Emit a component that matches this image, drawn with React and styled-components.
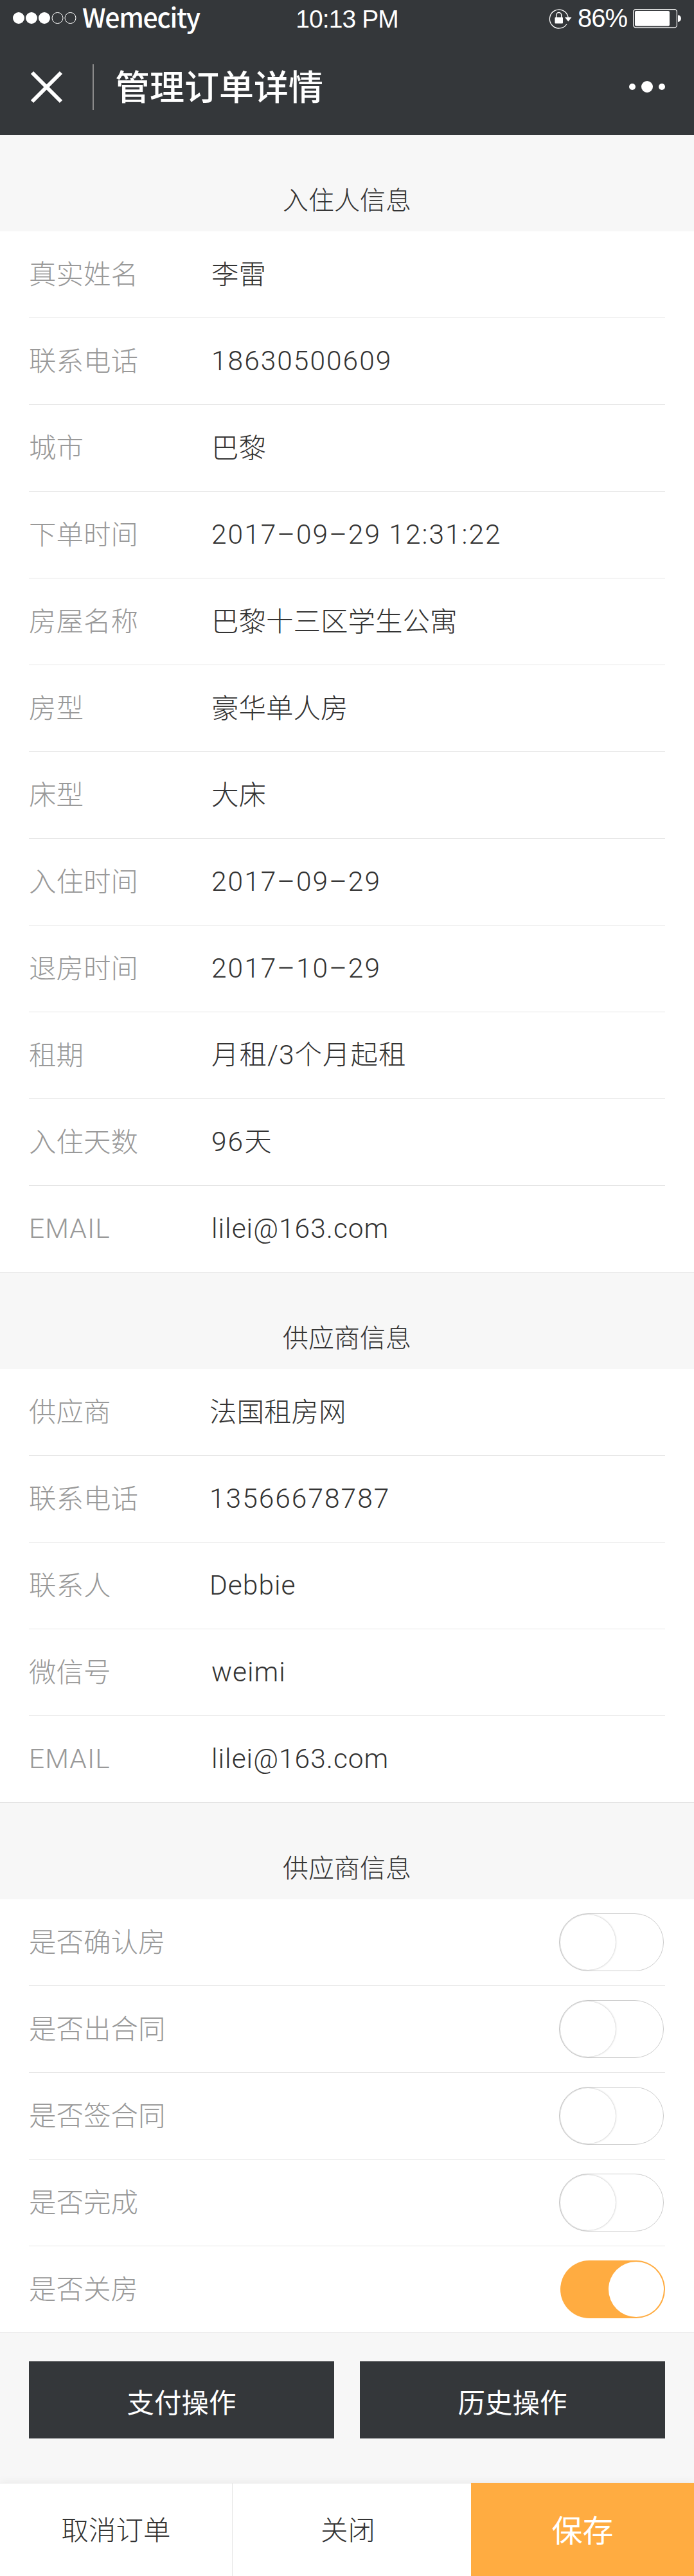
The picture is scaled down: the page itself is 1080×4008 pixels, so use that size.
import React from "react";
import styled, { createGlobalStyle } from "styled-components";

const latin = '"Liberation Sans", Arial';
const cjk = '"Noto Sans CJK SC", sans-serif';

const Global = createGlobalStyle`
  * { box-sizing: border-box; }
  body { margin: 0; background: #f7f7f7; }
`;

const Page = styled.div`
  width: 1080px;
  height: 4008px;
  display: flex;
  flex-direction: column;
  background: #f7f7f7;
  color: #333;
  font-family: ${cjk};
  font-weight: 300;
`;

const Header = styled.header`
  height: 210px;
  background: #34373a;
  color: #fff;
`;

const StatusBar = styled.div`
  height: 60px;
  display: grid;
  grid-template-columns: 400px 280px 400px;
`;

const Carrier = styled.div`
  display: flex;
  align-items: center;
  padding: 0 0 4px 20px;
  gap: 9px;
  height: 60px;
`;

const CarrierName = styled.span`
  font: 500 41px/50px ${cjk};
  letter-spacing: -1.3px;
  padding-bottom: 7px;
`;

const Clock = styled.div`
  text-align: center;
  font: 400 39px/60px ${latin}, sans-serif;
  letter-spacing: -0.9px;
`;

const Power = styled.div`
  display: flex;
  align-items: center;
  justify-content: flex-end;
  height: 57px;
  padding-right: 20px;
  gap: 9px;
  font: 400 40px/57px ${latin}, sans-serif;
`;

const Percent = styled.span`
  letter-spacing: -1px;
`;

const NavBar = styled.div`
  height: 150px;
  display: flex;
  align-items: center;
  padding: 0 45px 0 47px;
`;

const Divider = styled.i`
  width: 2px;
  height: 71px;
  margin: 0 33px 0 46px;
  background: #8a8a8a;
`;

const Title = styled.h1`
  margin: 0;
  padding-bottom: 5px;
  flex: 1;
  font-size: 54px;
  font-weight: 500;
  line-height: 80px;
`;

const SectionTitle = styled.h2`
  margin: 0;
  height: 150px;
  padding-top: 69px;
  text-align: center;
  font-size: 40px;
  font-weight: 300;
  line-height: 60px;
`;

const List = styled.section`
  background: #fff;
  padding: 0 45px;
  border-bottom: 1px solid #e5e5e5;
`;

const Row = styled.div`
  height: 135px;
  display: flex;
  align-items: center;
  border-bottom: 1px solid #e5e5e5;
  font: 300 42.5px/60px Inter, ${cjk};
  &:last-child { height: 134px; border-bottom: 0; }
`;

const Text = styled.span`
  font-family: ${(p) => (p.$tracking ? "Roboto" : "Inter")}, ${cjk};
  letter-spacing: ${(p) => p.$tracking}px;
`;

const Label = styled(Text)`
  width: ${(p) => (p.$narrow ? 281 : 284)}px;
  color: #999;
`;

const Switch = styled.span`
  margin-left: auto;
  margin-right: ${(p) => (p.$on ? 0 : 2)}px;
  width: 163px;
  height: 90px;
  padding: ${(p) => (p.$on ? 2 : 1)}px;
  display: flex;
  justify-content: ${(p) => (p.$on ? "flex-end" : "flex-start")};
  border-radius: 45px;
  border: ${(p) => (p.$on ? "0" : "1px solid #ccc")};
  background: ${(p) => (p.$on ? "#ffac41" : "#fff")};
`;

const Knob = styled.i`
  width: 86px;
  height: 86px;
  border-radius: 50%;
  background: #fff;
  box-shadow: ${(p) => (p.$on ? "none" : "0 0 3px rgba(0,0,0,.3)")};
`;

const Actions = styled.div`
  display: flex;
  gap: 40px;
  padding: 44px 45px 0;
  flex: 1;
`;

const ActionButton = styled.button`
  flex: 1;
  height: 120px;
  padding: 3px 0 0;
  border: 0;
  background: #34373a;
  color: #fff;
  font: 400 42.5px/60px ${cjk};
`;

const Footer = styled.footer`
  height: 145px;
  display: grid;
  grid-template-columns: 362px 371px 347px;
  box-shadow: 0 -2px 12px rgba(0, 0, 0, 0.05);
`;

const FooterButton = styled.button`
  padding: 0 ${(p) => (p.$inset || 0)}px 4px 0;
  border: 0 solid #e5e5e5;
  border-top-width: ${(p) => (p.$primary ? 0 : 1)}px;
  border-right-width: ${(p) => (p.$divided ? 1 : 0)}px;
  background: ${(p) => (p.$primary ? "#ffac41" : "#fff")};
  color: ${(p) => (p.$primary ? "#fff" : "#333")};
  font: ${(p) => (p.$primary ? "400 48px" : "300 42.5px")}/60px ${cjk};
`;

const guest = [
  ["真实姓名", "李雷"],
  ["联系电话", "18630500609"],
  ["城市", "巴黎"],
  ["下单时间", "2017–09–29 12:31:22"],
  ["房屋名称", "巴黎十三区学生公寓"],
  ["房型", "豪华单人房"],
  ["床型", "大床"],
  ["入住时间", "2017–09–29"],
  ["退房时间", "2017–10–29"],
  ["租期", "月租/3个月起租"],
  ["入住天数", "96天"],
  ["EMAIL", "lilei@163.com"],
];

const supplier = [
  ["供应商", "法国租房网", true],
  ["联系电话", "13566678787", true],
  ["联系人", "Debbie", true],
  ["微信号", "weimi"],
  ["EMAIL", "lilei@163.com"],
];

const switches = [
  ["是否确认房", false],
  ["是否出合同", false],
  ["是否签合同", false],
  ["是否完成", false],
  ["是否关房", true],
];

/* Numbers are set wider than words; pure Chinese text is not tracked. */
const tracking = (text) => {
  if (/^\d/.test(text)) return 2;
  return /[\w/]/.test(text) ? 1 : 0;
};

const Fields = ({ rows }) => (
  <List>
    {rows.map(([label, value, narrow]) => (
      <Row key={label}>
        <Label $narrow={narrow} $tracking={tracking(label)}>{label}</Label>
        <Text $tracking={tracking(value)}>{value}</Text>
      </Row>
    ))}
  </List>
);

export default function App() {
  return (
    <Page>
      <Global />
      <Header>
        <StatusBar>
          <Carrier>
            <svg width="99" height="20" viewBox="0 0 99 20" fill="#fff">
              <circle cx="9" cy="10" r="9" />
              <circle cx="29" cy="10" r="9" />
              <circle cx="49" cy="10" r="9" />
              <circle cx="69.5" cy="10" r="8.5" fill="none" stroke="#fff" />
              <circle cx="89.5" cy="10" r="8.5" fill="none" stroke="#fff" />
            </svg>
            <CarrierName>Wemecity</CarrierName>
          </Carrier>
          <Clock>10:13 PM</Clock>
          <Power>
            <svg width="36" height="32" viewBox="0 0 36 32" fill="none">
              <path d="M28 24.5A14.5 14.5 0 1 1 30.200 14" stroke="#fff" strokeWidth="1.3" />
              <path d="M25 14h10.500l-5.200 6.500z" fill="#fff" />
              <rect x="9.500" y="14" width="12.500" height="9.500" rx="1" fill="#fff" />
              <path d="M11.700 14v-3.500a4 4 0 0 1 8 0V14" stroke="#fff" strokeWidth="1.500" />
            </svg>
            <Percent>86%</Percent>
            <svg width="75" height="30" viewBox="0 0 75 30">
              <rect x=".6" y=".6" width="67.800" height="28.300" rx="4" fill="none" stroke="#fff" strokeWidth="1.200" />
              <rect x="3" y="3" width="54" height="23.500" rx="2" fill="#fff" />
              <path d="M70 9.500c6.500 .5 6.500 10 0 10.500z" fill="#fff" />
            </svg>
          </Power>
        </StatusBar>
        <NavBar>
          <svg width="51" height="51" viewBox="0 0 51 51" stroke="#fff" strokeWidth="6">
            <path d="M3 3l45 45M48 3L3 48" />
          </svg>
          <Divider />
          <Title>管理订单详情</Title>
          <svg width="56" height="20" viewBox="0 0 56 20" fill="#fff">
            <circle cx="5" cy="10" r="5" />
            <circle cx="28" cy="10" r="9" />
            <circle cx="51" cy="10" r="5" />
          </svg>
        </NavBar>
      </Header>
      <SectionTitle>入住人信息</SectionTitle>
      <Fields rows={guest} />
      <SectionTitle>供应商信息</SectionTitle>
      <Fields rows={supplier} />
      <SectionTitle>供应商信息</SectionTitle>
      <List>
        {switches.map(([label, on]) => (
          <Row key={label}>
            <Label $tracking={0}>{label}</Label>
            <Switch $on={on}>
              <Knob $on={on} />
            </Switch>
          </Row>
        ))}
      </List>
      <Actions>
        <ActionButton>支付操作</ActionButton>
        <ActionButton>历史操作</ActionButton>
      </Actions>
      <Footer>
        <FooterButton $divided>取消订单</FooterButton>
        <FooterButton $inset={12}>关闭</FooterButton>
        <FooterButton $primary>保存</FooterButton>
      </Footer>
    </Page>
  );
}
